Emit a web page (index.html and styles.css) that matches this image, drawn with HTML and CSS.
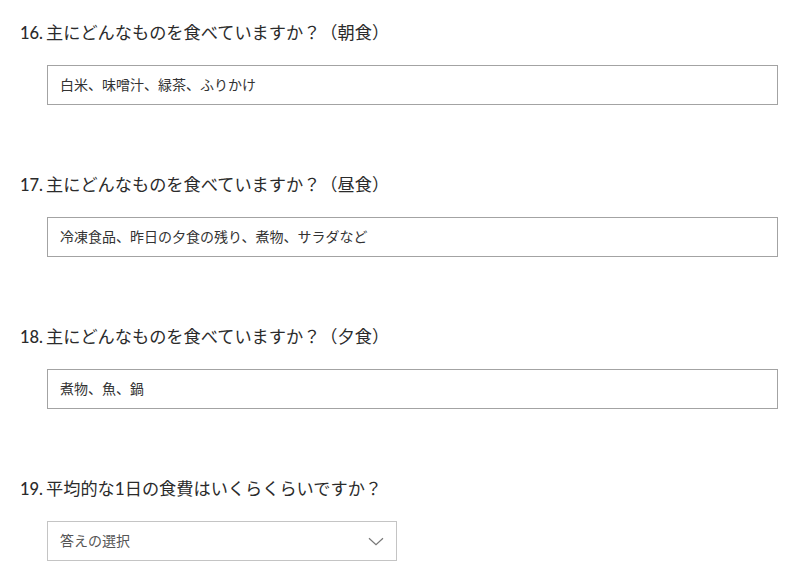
FILE: index.html
```html
<!DOCTYPE html>
<html lang="ja">
<head>
<meta charset="utf-8">
<link rel="stylesheet" href="styles.css">
</head>
<body>
<div class="form">
  <div class="question">
    <div class="title"><span class="num">16.</span><span class="label">主にどんなものを食べていますか？（朝食）</span></div>
    <div class="field">白米、味噌汁、緑茶、ふりかけ</div>
  </div>
  <div class="question">
    <div class="title"><span class="num">17.</span><span class="label">主にどんなものを食べていますか？（昼食）</span></div>
    <div class="field">冷凍食品、昨日の夕食の残り、煮物、サラダなど</div>
  </div>
  <div class="question">
    <div class="title"><span class="num">18.</span><span class="label">主にどんなものを食べていますか？（夕食）</span></div>
    <div class="field">煮物、魚、鍋</div>
  </div>
  <div class="question">
    <div class="title"><span class="num">19.</span><span class="label">平均的な1日の食費はいくらくらいですか？</span></div>
    <div class="select"><span>答えの選択</span>
      <svg class="chev" width="16" height="9" viewBox="0 0 16 9"><path d="M1 1.2 L8 7.8 L15 1.2" fill="none" stroke="#777" stroke-width="1.2"/></svg>
    </div>
  </div>
</div>
</body>
</html>
```
FILE: styles.css
```css
html, body {
  margin: 0;
  padding: 0;
  background: #fff;
}
body {
  font-family: "Lato", "Noto Sans CJK JP", sans-serif;
  color: #2b2b2b;
}
.form {
  padding-top: 21px;
  display: flex;
  flex-direction: column;
  gap: 68px;
}
.question {
  display: flex;
  flex-direction: column;
  gap: 20px;
}
.title {
  display: flex;
  align-items: center;
  height: 24px;
  font-size: 17.2px;
  line-height: 24px;
}
.num {
  width: 43px;
  text-align: right;
  margin-right: 3px;
  font-weight: 500;
  font-size: 16.5px;
}
.field, .select {
  margin-left: 47px;
  box-sizing: border-box;
  height: 40px;
  border: 1px solid #a3a3a3;
  font-size: 14px;
  padding: 0 12px 2px;
  display: flex;
  align-items: center;
  color: #333;
}
.field {
  width: 731px;
}
.select {
  width: 350px;
  justify-content: space-between;
  border-color: #c4c4c4;
  color: #555;
}
.chev {
  margin-top: 2px;
}
```
